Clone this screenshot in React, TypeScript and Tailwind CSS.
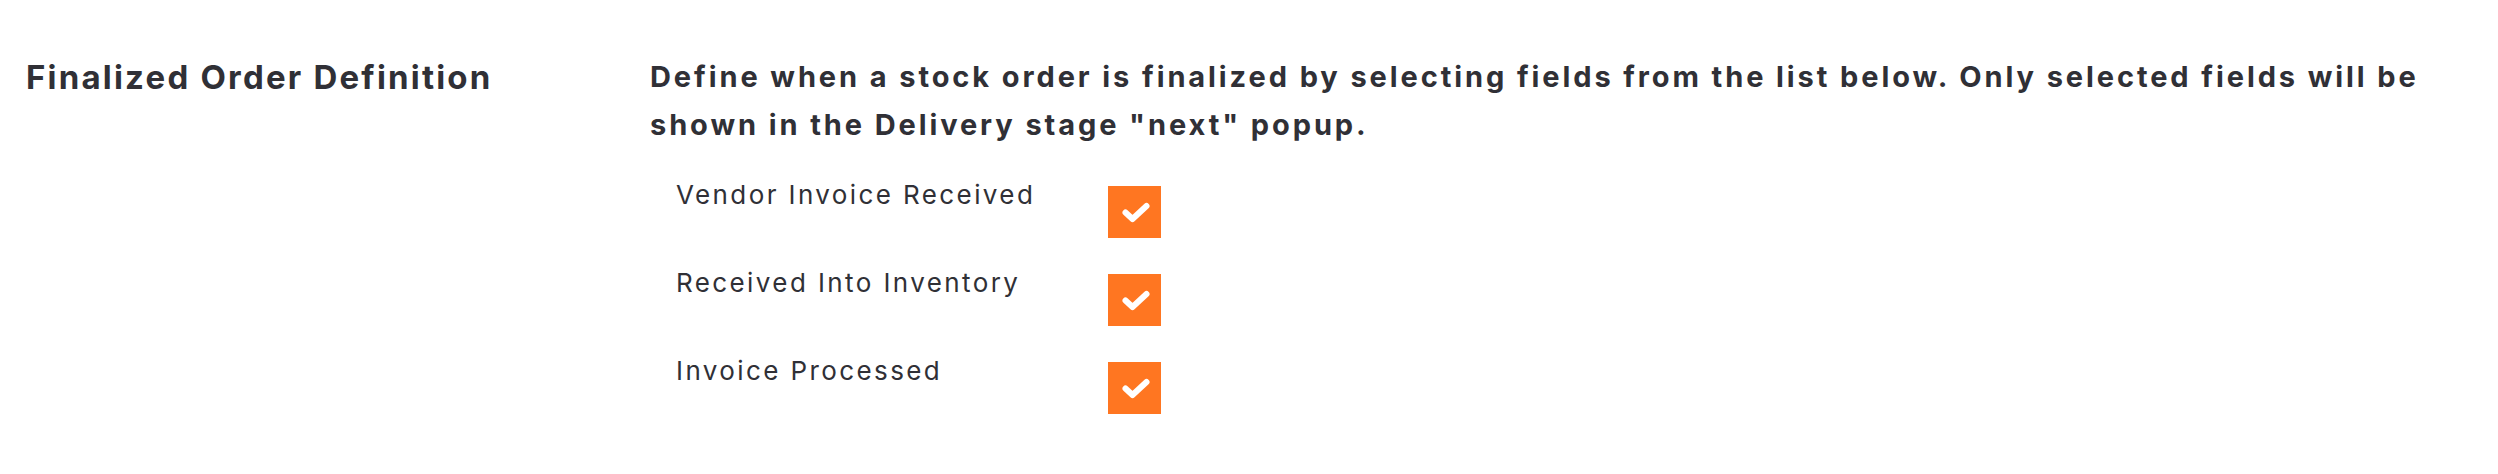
import React from 'react';

const fields = ['Vendor Invoice Received', 'Received Into Inventory', 'Invoice Processed'];

const CheckBox: React.FC = () => (
  <div className="w-[53px] h-[52px] mt-[9px] bg-[#ff7621] flex-none">
    <svg width="53" height="52" viewBox="0 0 53 52">
      <polyline
        points="17.5,26.5 24.5,33 38.5,20"
        fill="none"
        stroke="#fff"
        strokeWidth="6"
        strokeLinecap="round"
        strokeLinejoin="round"
      />
    </svg>
  </div>
);

const App: React.FC = () => {
  return (
    <div className="w-[2498px] h-[474px] bg-white text-[#303036] font-['Inter',sans-serif]">
      <div className="flex pl-[26px] pt-[53px]">
        {/* Section title */}
        <div className="w-[624px] flex-none pt-[4px]">
          <h2 className="text-[33px] leading-[40px] font-bold tracking-[2.2px]">
            Finalized Order Definition
          </h2>
        </div>

        {/* Settings */}
        <div className="w-[1790px]">
          <p className="text-[29px] leading-[48px] font-bold tracking-[2.9px]">
            Define when a stock order is finalized by selecting fields from the list below. Only selected fields will be
            shown in the Delivery stage "next" popup.
          </p>
          <div className="pl-[26px] pt-[28px] flex flex-col gap-[27px]">
            {fields.map((f) => (
              <div key={f} className="flex items-start">
                <span className="w-[432px] pt-[3px] text-[26px] leading-[30px] tracking-[2.4px]">{f}</span>
                <CheckBox />
              </div>
            ))}
          </div>
        </div>
      </div>
    </div>
  );
};

export default App;
